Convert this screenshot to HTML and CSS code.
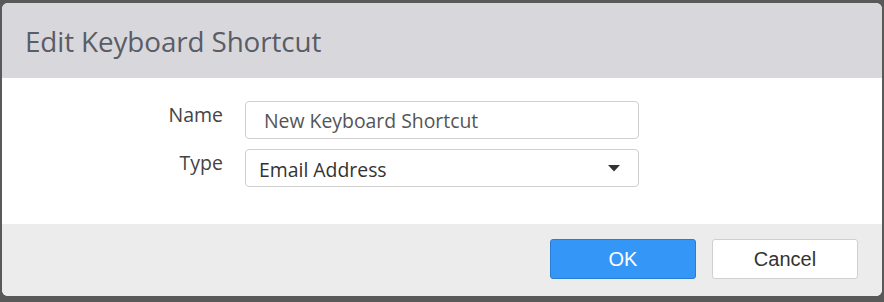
FILE: index.html
```html
<!DOCTYPE html>
<html lang="en">
<head>
  <meta charset="UTF-8">
  <title>Edit Keyboard Shortcut</title>
  <link rel="stylesheet" href="styles.css">
</head>
<body>

  <div class="dialog">
    <div class="dialog-header">
      <h1 class="dialog-title">Edit Keyboard Shortcut</h1>
    </div>

    <div class="dialog-body">
      <div class="form-row">
        <label class="form-label" for="name">Name</label>
        <div class="form-field name-field">New Keyboard Shortcut</div>
      </div>
      <div class="form-row">
        <label class="form-label">Type</label>
        <div class="form-field select-field">
          <span>Email Address</span>
          <svg class="caret" width="12" height="7" viewBox="0 0 12 7"><path d="M0 0 L12 0 L6 6.5 Z" fill="#333"/></svg>
        </div>
      </div>
    </div>

    <div class="dialog-footer">
      <button class="btn btn-primary">OK</button>
      <button class="btn btn-default">Cancel</button>
    </div>
  </div>

</body>
</html>
```

FILE: styles.css
```css
body {
  margin: 0;
  padding: 3px 2px 6px 2px;
  background-color: #595959;
  font-family: "Open Sans", "Noto Sans", sans-serif;
}

.dialog {
  width: 880px;
  height: 293px;
  border-radius: 6px;
  overflow: hidden;
  display: flex;
  flex-direction: column;
  background-color: #fff;
}

.dialog-header {
  height: 75px;
  background-color: #d8d8dc;
  display: flex;
  align-items: center;
  padding-left: 23px;
  box-sizing: border-box;
}

.dialog-title {
  margin: 0;
  font-size: 27.8px;
  font-weight: normal;
  color: #5a5c66;
  letter-spacing: -0.1px;
}

.dialog-body {
  height: 146px;
  padding-top: 23px;
  box-sizing: border-box;
  background-color: #fff;
}

.form-row {
  display: flex;
  align-items: flex-start;
  margin-bottom: 10px;
}

.form-label {
  width: 221px;
  text-align: right;
  font-size: 19.5px;
  color: #444;
  padding-top: 0;
}

.form-field {
  margin-left: 22px;
  width: 394px;
  height: 38px;
  box-sizing: border-box;
  border: 1px solid #cfcfcf;
  border-radius: 4px;
  display: flex;
  align-items: center;
  font-size: 19.4px;
}

.name-field {
  padding-left: 18px;
  color: #555;
}

.select-field {
  padding: 2px 18px 0 13px;
  justify-content: space-between;
  color: #333;
}

.caret {
  margin-top: -2px;
}

.dialog-footer {
  flex: 1;
  background-color: #ececec;
  display: flex;
  justify-content: flex-end;
  align-items: center;
  padding-right: 24px;
  padding-bottom: 2px;
  gap: 16px;
}

.btn {
  width: 146px;
  height: 40px;
  border-radius: 3px;
  font-family: "Liberation Sans", Arial, sans-serif;
  font-size: 20px;
  cursor: pointer;
}

.btn-primary {
  background-color: #3496f6;
  border: 1px solid #2a7cd0;
  color: #fff;
}

.btn-default {
  background-color: #fff;
  border: 1px solid #d0d0d0;
  color: #333;
}
```
